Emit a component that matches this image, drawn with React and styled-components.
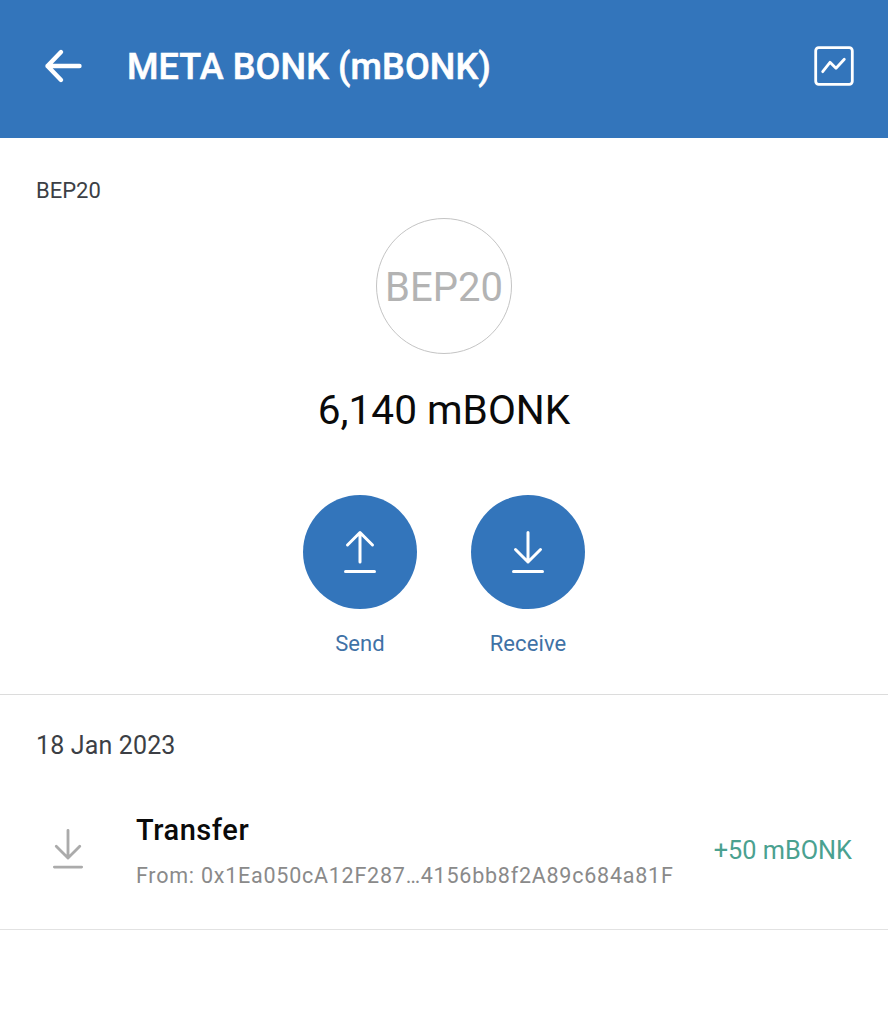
import React from "react";
import styled, { createGlobalStyle } from "styled-components";

const Global = createGlobalStyle`
  html, body { margin: 0; padding: 0; background: #fff; }
  body { font-family: Roboto, "Liberation Sans", sans-serif; }
`;
const Page = styled.div`width: 888px; height: 1024px; background: #fff; overflow: hidden;`;
const Header = styled.header`
  height: 138px; background: #3375bb; display: flex; align-items: center;
  padding: 0 34px 6px 44px; box-sizing: border-box; color: #fff;
`;
const IconSlot = styled.div`display: flex; flex: none;`;
const Title = styled.h1`
  margin: 2px 0 0 45px; flex: 1; font-size: 36px; line-height: 44px; font-weight: 500;
  -webkit-text-stroke: 0.55px #fff; letter-spacing: 0.1px;
`;
const Summary = styled.section`
  height: 557px; box-sizing: border-box; border-bottom: 1px solid #dcdcdc;
  padding: 40px 0 0; display: flex; flex-direction: column; align-items: center;
`;
const Tag = styled.div`
  align-self: flex-start; margin-left: 36px; font-size: 22px; line-height: 26px; color: #3c3f45; height: 26px;
`;
const Logo = styled.div`
  width: 136px; height: 136px; box-sizing: border-box; margin-top: 14px; border: 1px solid #c4c4c4;
  border-radius: 50%; display: flex; align-items: center; justify-content: center;
  font-size: 40px; line-height: 46px; padding-top: 4px; color: #b3b3b3;
`;
const Balance = styled.div`margin-top: 30px; font-size: 40.6px; line-height: 52px; color: #0a0a0a;`;
const Actions = styled.div`display: flex; gap: 54px; margin-top: 59px;`;
const Action = styled.div`display: flex; flex-direction: column; align-items: center; width: 114px;`;
const Round = styled.div`
  width: 114px; height: 114px; border-radius: 50%; background: #3375bb;
  display: flex; align-items: center; justify-content: center;
`;
const ActionLabel = styled.div`margin-top: 22px; font-size: 22px; line-height: 26px; color: #3f72a6; letter-spacing: 0.1px;`;
const DateLabel = styled.div`
  padding: 36px 0 0 36px; font-size: 25px; line-height: 30px; color: #3c3f45; height: 30px; letter-spacing: 0.15px;
`;
const Row = styled.div`
  margin-top: 27px; height: 142px; box-sizing: border-box; border-bottom: 1px solid #e2e2e2;
  display: flex; align-items: center; padding: 0 36px 0 52px;
`;
const RowIcon = styled.div`display: flex; width: 84px; flex: none; margin-bottom: 19px;`;
const RowText = styled.div`flex: 1; min-width: 0; padding-bottom: 16px;`;
const RowTitle = styled.div`font-size: 29px; line-height: 34px; font-weight: 500; color: #0a0a0a; letter-spacing: 0.55px;`;
const RowSub = styled.div`margin-top: 16px; font-size: 21.5px; line-height: 26px; color: #8a8a8a; white-space: nowrap; letter-spacing: 0.76px;`;
const Amount = styled.div`font-size: 25.3px; line-height: 30px; color: #4aa190; margin-bottom: 15px; white-space: nowrap;`;

const Back = () => (
  <svg width="38" height="36" viewBox="0 0 38 36" fill="none" stroke="#fff" strokeWidth="4.4" strokeLinecap="round" strokeLinejoin="round">
    <path d="M35.500 18H3.500M17 4 3.500 18 17 32" />
  </svg>
);
const Chart = () => (
  <svg width="40" height="40" viewBox="0 0 40 40" fill="none" stroke="#fff" strokeWidth="2.8" strokeLinecap="round" strokeLinejoin="round">
    <rect x="1.700" y="1.700" width="36.600" height="36.600" rx="3" />
    <path d="M8.700 25.700 16 16.300l6 6 8.300-9" />
  </svg>
);
const Up = () => (
  <svg width="34" height="44" viewBox="0 0 34 44" fill="none" stroke="#fff" strokeWidth="3" strokeLinecap="round" strokeLinejoin="round">
    <path d="M17 32V2.500M4.500 15 17 2.500 29.500 15" />
    <path d="M2.500 41.500h29" />
  </svg>
);
const Down = ({ color = "#fff", size = 34 }) => (
  <svg width={size} viewBox="0 0 34 44" fill="none" stroke={color} strokeWidth="3" strokeLinecap="round" strokeLinejoin="round">
    <path d="M17 2.500V32M4.500 19.500 17 32l12.500-12.500" />
    <path d="M2.500 41.500h29" />
  </svg>
);

export default function App() {
  return (
    <Page>
      <Global />
      <Header>
        <IconSlot><Back /></IconSlot>
        <Title>META BONK (mBONK)</Title>
        <IconSlot><Chart /></IconSlot>
      </Header>
      <Summary>
        <Tag>BEP20</Tag>
        <Logo>BEP20</Logo>
        <Balance>6,140 mBONK</Balance>
        <Actions>
          <Action>
            <Round><Up /></Round>
            <ActionLabel>Send</ActionLabel>
          </Action>
          <Action>
            <Round><Down /></Round>
            <ActionLabel>Receive</ActionLabel>
          </Action>
        </Actions>
      </Summary>
      <DateLabel>18 Jan 2023</DateLabel>
      <Row>
        <RowIcon><Down color="#ababab" size={32} /></RowIcon>
        <RowText>
          <RowTitle>Transfer</RowTitle>
          <RowSub>From: 0x1Ea050cA12F287…4156bb8f2A89c684a81F</RowSub>
        </RowText>
        <Amount>+50 mBONK</Amount>
      </Row>
    </Page>
  );
}
